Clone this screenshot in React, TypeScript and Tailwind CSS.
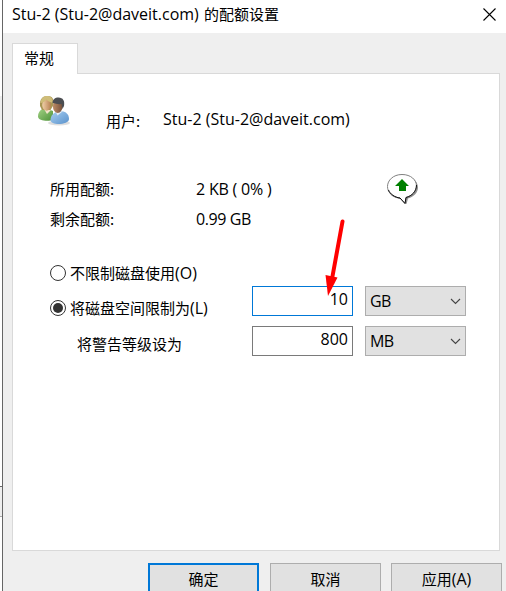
import type { ReactNode } from "react";

function Latin({ children, className = "" }: { children: ReactNode; className?: string }) {
  return <span className={`font-['Open_Sans','Noto_Sans',sans-serif] whitespace-pre ${className}`}>{children}</span>;
}

function UsersIcon() {
  return (
    <svg width="34" height="34" viewBox="0 0 34 34" className="block shrink-0">
      <defs>
        <linearGradient id="green" x1="0" y1="0" x2="1" y2="1">
          <stop offset="0" stopColor="#a5d487" />
          <stop offset="1" stopColor="#4d9138" />
        </linearGradient>
        <linearGradient id="blue" x1="0" y1="0" x2="1" y2="1">
          <stop offset="0" stopColor="#a9d0f2" />
          <stop offset="1" stopColor="#5a92cc" />
        </linearGradient>
        <linearGradient id="skin" x1="0" y1="0" x2="1" y2="0">
          <stop offset="0" stopColor="#f0cfa8" />
          <stop offset="1" stopColor="#b98356" />
        </linearGradient>
        <linearGradient id="tan" x1="0" y1="0" x2="1" y2="0">
          <stop offset="0" stopColor="#bd8c66" />
          <stop offset="1" stopColor="#76503b" />
        </linearGradient>
      </defs>
      <ellipse cx="22" cy="29" rx="11" ry="2.500" fill="#dedede" />
      <path d="M1 22.500c0-5 3-7.500 7.500-8.500l7.500 3v9c-5 1.500-15 1-15-3.500z" fill="url(#green)" />
      <path d="M7 15l3 5 4-4z" fill="#f3e4ca" />
      <path d="M3 12C2.500 5 5.500 2 10.500 2S17 5 16.500 11l-3 5H5z" fill="#a99755" />
      <ellipse cx="9.500" cy="11" rx="4.300" ry="5.800" fill="url(#skin)" />
      <path d="M3.500 9C6 9 8.500 7 9.500 5.500 11 8 14 8 16 9 16 4.500 13.500 2 10 2S4 4.500 3.500 9z" fill="#cfbd79" />
      <path d="M13.500 26c0-5 4-8 8-9l5 .5c3.500 1 5.500 4 5.500 7.500 0 6-18.500 7-18.500 1z" fill="url(#blue)" />
      <path d="M18.500 17.500l2 4 5-4z" fill="#e3edf6" />
      <ellipse cx="20.700" cy="12.500" rx="4.800" ry="6.500" fill="url(#tan)" />
      <path d="M15.500 9c0-3.500 2.500-5.500 6-5.500 4.500 0 6.500 3.500 5.500 8.500l-1.500 3-1-5c-3 .5-6-.5-9-1z" fill="#4c4e52" />
    </svg>
  );
}

function StatusBubble() {
  return (
    <svg width="34" height="33" viewBox="0 0 34 33" className="block">
      <path d="M17 3C26 3 32 8 32 14.500c0 5-4 9-10 11L20.500 31 15 26C7 25 2 21 2 15S8 3 17 3z" fill="#909090" />
      <path d="M16 1.500C25 1.500 30.500 7 30.500 13S26 23 20 24.500L19 30.500 14 25C6.500 24 1.500 19.500 1.500 13.500S7 1.500 16 1.500z" fill="#fff" stroke="#808080" />
      <path d="M30.500 12c0 6-4.500 11-10.500 12.500L19 30.500 14 25C9 24.500 4 21 2.500 17" fill="none" stroke="#111" />
      <path d="M16 6l7 7h-3v5h-7v-5H9z" fill="#008000" />
    </svg>
  );
}

function Radio({ checked = false }: { checked?: boolean }) {
  return (
    <span className="flex size-4 shrink-0 items-center justify-center rounded-full border border-[#333] bg-white">
      {checked && <span className="size-2.5 rounded-full bg-[#333]" />}
    </span>
  );
}

function Unit({ children }: { children: string }) {
  return (
    <div className="ml-3 flex h-[30px] w-[101px] items-center justify-between border border-[#adadad] bg-[#e1e1e1] px-1">
      <Latin className="text-[16px] tracking-[-0.7px]">{children}</Latin>
      <svg width="11" height="7" viewBox="0 0 11 7"><path d="M1 1l4.500 4.500L10 1" fill="none" stroke="#444" strokeWidth="1.100" /></svg>
    </div>
  );
}

export default function App() {
  return (
    <div className="flex h-[591px] w-[506px] overflow-hidden bg-white font-['Noto_Sans_CJK_SC',sans-serif] text-[15px] leading-5 text-black">
      <div className="flex w-[3px] shrink-0 flex-col border-r border-[#666]">
        <div className="mt-24 h-6 bg-[#eee]" />
        <div className="mt-[366px] h-[31px] border-t border-b border-t-[#666] border-b-[#aaa] bg-[#eee]" />
      </div>
      <main className="flex min-w-0 flex-1 flex-col bg-[#efefef]">
        <header className="flex h-[33px] shrink-0 items-center justify-between bg-white pr-[10px] pb-[5px] pl-[9px]">
          <h1 className="flex items-center">
            <Latin className="w-[192px] text-[16px]">Stu-2 (Stu-2@daveit.com)</Latin>
            <span>的配额设置</span>
          </h1>
          <svg width="13" height="13" viewBox="0 0 13 13"><path d="M.5.5l12 12m0-12l-12 12" stroke="#000" strokeWidth="1.100" /></svg>
        </header>
        <div className="z-10 mt-[10px] -mb-px ml-[9px] flex h-[31px] w-[66px] shrink-0 items-center border border-b-0 border-[#d9d9d9] bg-white pb-[2px] pl-[11px]">常规</div>
        <section className="relative ml-[9px] flex h-[478px] w-[488px] shrink-0 flex-col border border-[#d9d9d9] bg-white">
          <div className="mt-5 flex h-[34px] pl-6">
            <UsersIcon />
            <span className="mt-[17px] ml-[35px] w-[57px]">用户:</span>
            <Latin className="mt-[15px] text-[16px]">Stu-2 (Stu-2@daveit.com)</Latin>
          </div>
          <div className="mt-[44px] flex h-[67px] pl-[37px]">
            <dl className="grid w-[336px] grid-cols-[146px_1fr] grid-rows-[30px_30px]">
              <dt className="mt-[7px]">所用配额:</dt>
              <dd className="mt-[7px]"><Latin className="text-[16px] tracking-[-0.2px]">2 KB ( 0% )</Latin></dd>
              <dt className="mt-[7px]">剩余配额:</dt>
              <dd className="mt-[7px]"><Latin className="text-[16px] tracking-[-0.4px]">0.99 GB</Latin></dd>
            </dl>
            <div className="mt-px"><StatusBubble /></div>
          </div>
          <label className="mt-[24px] flex h-5 items-center gap-1 pl-[37px]">
            <Radio /><span>不限制磁盘使用<Latin className="text-[16px]">(O)</Latin></span>
          </label>
          <div className="mt-[3px] flex h-[30px] pl-[37px]">
            <label className="mt-[12px] flex h-5 w-[202px] items-center gap-1"><Radio checked /><span>将磁盘空间限制为<Latin className="text-[16px]">(L)</Latin></span></label>
            <div className="flex w-[101px] items-center justify-end border border-[#0078d7] bg-white pr-1 pb-[5px]"><Latin className="text-[16px]">10</Latin></div>
            <Unit>GB</Unit>
          </div>
          <div className="mt-[10px] flex h-[30px] pl-[64px]">
            <span className="mt-[8px] w-[175px]">将警告等级设为</span>
            <div className="flex w-[101px] items-center justify-end border border-[#7a7a7a] bg-white pr-1 pb-[5px]"><Latin className="text-[16px]">800</Latin></div>
            <Unit>MB</Unit>
          </div>
          <svg className="pointer-events-none absolute top-[144px] left-[311px]" width="24" height="80" viewBox="0 0 24 80">
            <path d="M18.500 3.500L8 61" stroke="#f00" strokeWidth="4" strokeLinecap="round" />
            <path d="M1.500 57L13.500 59.500 4 78z" fill="#f00" />
          </svg>
        </section>
        <footer className="mt-3 flex shrink-0 pl-[145px]">
          <button className="h-[34px] w-[111px] border-2 border-[#0078d7] bg-[#e1e1e1] pb-[2px]">确定</button>
          <button className="ml-[11px] h-[34px] w-[111px] border border-[#adadad] bg-[#e1e1e1] pb-[2px]">取消</button>
          <button className="ml-[10px] h-[34px] w-[111px] border border-[#adadad] bg-[#e1e1e1] pb-[2px]">应用<Latin className="text-[16px]">(A)</Latin></button>
        </footer>
      </main>
    </div>
  );
}
